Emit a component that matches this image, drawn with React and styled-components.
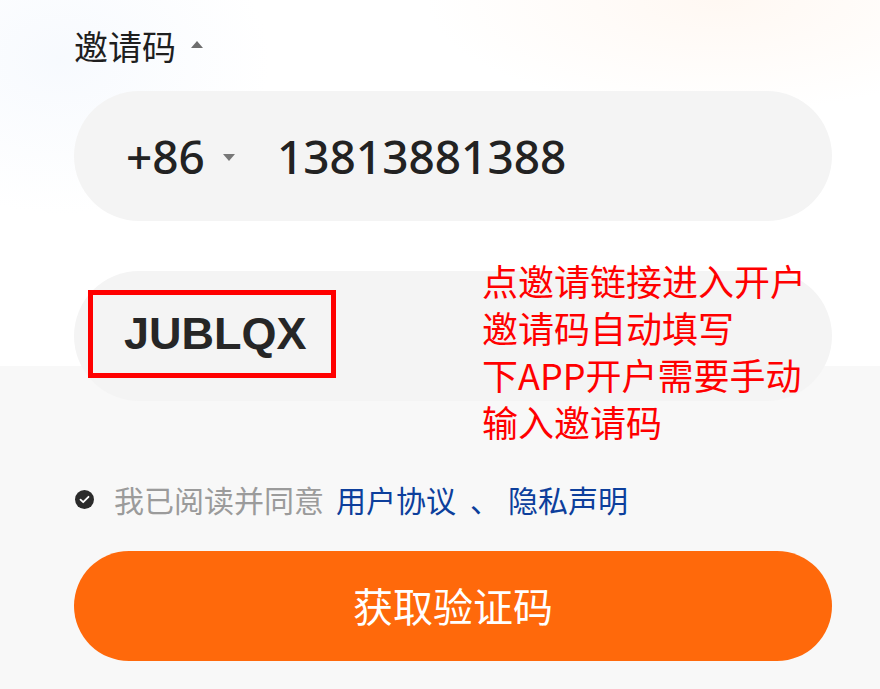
import styled, { createGlobalStyle } from "styled-components";

const GlobalStyle = createGlobalStyle`
  html, body {
    margin: 0;
    padding: 0;
  }
  body {
    width: 880px;
    height: 689px;
    overflow: hidden;
    font-family: "Noto Sans", "Noto Sans CJK SC", sans-serif;
    background:
      radial-gradient(ellipse 300px 220px at 60px 60px, rgba(232, 240, 252, 0.35), transparent 70%),
      radial-gradient(ellipse 420px 160px at 720px 0px, rgba(255, 232, 214, 0.3), transparent 70%),
      linear-gradient(to bottom, #ffffff 0, #ffffff 366px, #f8f8f8 366px, #f8f8f8 100%);
  }
`;

const Page = styled.div`
  position: relative;
  display: flex;
  flex-direction: column;
  padding: 22px 48px 0 74px;
`;

const Label = styled.div`
  display: flex;
  align-items: center;
  gap: 15px;
  font-family: "Noto Sans CJK SC", sans-serif;
  font-size: 34px;
  line-height: 48px;
  color: #1f1f1f;
`;

const Caret = styled.span`
  width: 0;
  height: 0;
  border-left: 6px solid transparent;
  border-right: 6px solid transparent;
  border-${(p) => (p.up ? "bottom" : "top")}: 7px solid ${(p) => p.color || "#666"};
  margin-top: ${(p) => (p.up ? "-4px" : "2px")};
`;

const Field = styled.div`
  display: flex;
  align-items: center;
  height: 130px;
  border-radius: 65px;
  background: #f4f4f4;
  margin-top: ${(p) => p.top}px;
  padding-left: ${(p) => p.pad}px;
`;

const Prefix = styled.div`
  display: flex;
  align-items: center;
  gap: 18px;
  font-size: 46px;
  font-weight: 500;
  color: #222;
  margin-right: 42px;
`;

const Phone = styled.span`
  font-size: 46px;
  font-weight: 500;
  color: #222;
`;

const CodeBox = styled.div`
  box-sizing: border-box;
  width: 248px;
  height: 88px;
  border: 5px solid #ff0000;
  display: flex;
  align-items: center;
  padding-left: 31px;
  margin-top: -4px;
  font-family: "Liberation Sans", Arial, sans-serif;
  font-weight: 700;
  font-size: 45px;
  color: #262626;
`;

const Note = styled.div`
  position: absolute;
  left: 482px;
  top: 257px;
  font-family: "Noto Sans CJK SC", sans-serif;
  font-size: 36px;
  line-height: 47px;
  color: #ff0000;
`;

const Agree = styled.div`
  display: flex;
  align-items: center;
  margin-top: 78px;
  font-family: "Noto Sans CJK SC", sans-serif;
  font-size: 30px;
  line-height: 40px;
`;

const Check = styled.span`
  width: 19px;
  height: 19px;
  border-radius: 50%;
  background: #2b2b2b;
  display: flex;
  align-items: center;
  justify-content: center;
  margin: 0 20px 0 1px;
`;

const Gray = styled.span`
  color: #9b9b9b;
  margin-right: 12px;
`;

const Link = styled.span`
  color: #0d3f9c;
`;

const Sep = styled.span`
  color: #0d3f9c;
  margin: 0 8px 0 14px;
`;

const Button = styled.button`
  margin-top: 32px;
  height: 110px;
  border: none;
  border-radius: 55px;
  background: #ff690b;
  color: #fff;
  font-family: "Noto Sans CJK SC", sans-serif;
  font-size: 40px;
  line-height: 1;
  padding-bottom: 4px;
`;

export default function App() {
  return (
    <>
      <GlobalStyle />
      <Page>
        <Label>
          邀请码
          <Caret up color="#6e6e6e" />
        </Label>

        <Field top={21} pad={52}>
          <Prefix>
            +86
            <Caret color="#777" />
          </Prefix>
          <Phone>13813881388</Phone>
        </Field>

        <Field top={50} pad={14}>
          <CodeBox>JUBLQX</CodeBox>
        </Field>

        <Note>
          点邀请链接进入开户
          <br />
          邀请码自动填写
          <br />
          下APP开户需要手动
          <br />
          输入邀请码
        </Note>

        <Agree>
          <Check>
            <svg width="11" height="9" viewBox="0 0 11 9">
              <path d="M1.5 4.6 L4.2 7.2 L9.5 1.8" fill="none" stroke="#fff" strokeWidth="1.8" strokeLinecap="round" strokeLinejoin="round" />
            </svg>
          </Check>
          <Gray>我已阅读并同意</Gray>
          <Link>用户协议</Link>
          <Sep>、</Sep>
          <Link>隐私声明</Link>
        </Agree>

        <Button>获取验证码</Button>
      </Page>
    </>
  );
}
